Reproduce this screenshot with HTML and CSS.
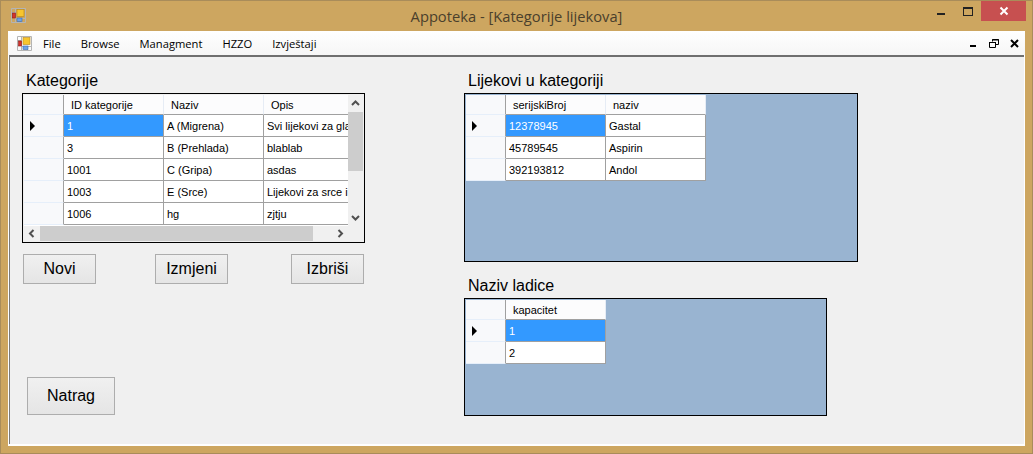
FILE: index.html
```html
<!DOCTYPE html>
<html lang="en">
<head>
<meta charset="UTF-8" />
<title>Appoteka - [Kategorije lijekova]</title>
<link rel="stylesheet" href="styles.css">
</head>
<body>
<svg class="defs" width="0" height="0">
    <symbol id="app-icon" viewBox="0 0 15 15">
        <path d="M0.5 0.5H14.5V14.5H0.5ZM0.5 4.5H4.5M4.5 0.5V14.5M4.5 10.5H14.5M10.5 10.5V14.5" fill="none" stroke="#b4b4b4" />
        <rect x="1.500" y="5" width="3" height="5" fill="#d5322c" stroke="#8c1c18" stroke-width="0.6" />
        <rect x="6" y="1.500" width="7" height="7" fill="#f7c52e" stroke="#b8861a" stroke-width="0.6" />
        <rect x="6" y="10" width="5" height="3.500" fill="#6ea2e6" stroke="#3a6cb0" stroke-width="0.6" />
    </symbol>
</svg>

<div class="window">
    <div class="titlebar">
        <div class="title-left">
            <svg class="icon"><use href="#app-icon" /></svg>
        </div>
        <div class="title">Appoteka - [Kategorije lijekova]</div>
        <div class="caption">
            <span class="cap-min"></span>
            <span class="cap-max"></span>
            <span class="cap-close">
                <svg width="10" height="10" viewBox="0 0 10 10"><path d="M1.5 1.5L8.5 8.5M8.5 1.5L1.5 8.5" stroke="#fff" stroke-width="2" /></svg>
            </span>
        </div>
    </div>

    <div class="client">
        <div class="menubar">
            <svg class="icon"><use href="#app-icon" /></svg>
            <nav class="menu">
                <span>File</span>
                <span>Browse</span>
                <span>Managment</span>
                <span>HZZO</span>
                <span>Izvještaji</span>
            </nav>
            <div class="mdi-controls">
                <span class="mdi-min"></span>
                <svg width="10" height="9" viewBox="0 0 10 9"><path d="M3.5 2.5V0.5H9.5V5.5H7M0.5 3.5H6.5V8.5H0.5Z" fill="none" stroke="#000" /><path d="M3 1H10M0 3.5H7" stroke="#000" /></svg>
                <svg width="9" height="9" viewBox="0 0 9 9"><path d="M1 1L8 8M8 1L1 8" stroke="#000" stroke-width="2" /></svg>
            </div>
        </div>

        <div class="form">
            <section class="col-left">
                <h2 class="label label-first">Kategorije</h2>
                <div class="dgv dgv-scroll">
                    <div class="rows rows-cat">
                        <div class="cell rowhead"></div>
                        <div class="cell head">ID kategorije</div>
                        <div class="cell head">Naziv</div>
                        <div class="cell head">Opis</div>

                        <div class="cell rowhead"><i class="arrow"></i></div>
                        <div class="cell selected">1</div>
                        <div class="cell">A (Migrena)</div>
                        <div class="cell">Svi lijekovi za gla</div>

                        <div class="cell rowhead"></div>
                        <div class="cell">3</div>
                        <div class="cell">B (Prehlada)</div>
                        <div class="cell">blablab</div>

                        <div class="cell rowhead"></div>
                        <div class="cell">1001</div>
                        <div class="cell">C (Gripa)</div>
                        <div class="cell">asdas</div>

                        <div class="cell rowhead"></div>
                        <div class="cell">1003</div>
                        <div class="cell">E (Srce)</div>
                        <div class="cell">Lijekovi za srce i</div>

                        <div class="cell rowhead"></div>
                        <div class="cell">1006</div>
                        <div class="cell">hg</div>
                        <div class="cell">zjtju</div>
                    </div>
                    <div class="vscroll">
                        <svg width="15" height="17" viewBox="0 0 15 17"><path d="M4 10L7.5 6.5L11 10" fill="none" stroke="#505050" stroke-width="2" /></svg>
                        <div class="vtrack"><div class="vthumb"></div></div>
                        <svg width="15" height="17" viewBox="0 0 15 17"><path d="M4 7L7.5 10.5L11 7" fill="none" stroke="#505050" stroke-width="2" /></svg>
                    </div>
                    <div class="hscroll">
                        <svg width="16" height="15" viewBox="0 0 16 15"><path d="M9.500 4L6 7.500L9.500 11" fill="none" stroke="#505050" stroke-width="2" /></svg>
                        <div class="htrack"><div class="hthumb"></div></div>
                        <svg width="16" height="15" viewBox="0 0 16 15"><path d="M6.500 4L10 7.500L6.500 11" fill="none" stroke="#505050" stroke-width="2" /></svg>
                    </div>
                </div>
                <div class="actions">
                    <button class="btn">Novi</button>
                    <button class="btn btn-edit">Izmjeni</button>
                    <button class="btn btn-delete">Izbriši</button>
                </div>
                <button class="btn btn-back">Natrag</button>
            </section>

            <section class="col-right">
                <h2 class="label label-first">Lijekovi u kategoriji</h2>
                <div class="dgv dgv-drugs">
                    <div class="rows rows-drugs">
                        <div class="cell rowhead"></div>
                        <div class="cell head">serijskiBroj</div>
                        <div class="cell head">naziv</div>

                        <div class="cell rowhead"><i class="arrow"></i></div>
                        <div class="cell selected">12378945</div>
                        <div class="cell">Gastal</div>

                        <div class="cell rowhead"></div>
                        <div class="cell">45789545</div>
                        <div class="cell">Aspirin</div>

                        <div class="cell rowhead"></div>
                        <div class="cell">392193812</div>
                        <div class="cell">Andol</div>
                    </div>
                </div>
                <h2 class="label label-second">Naziv ladice</h2>
                <div class="dgv dgv-drawers">
                    <div class="rows rows-drawers">
                        <div class="cell rowhead"></div>
                        <div class="cell head">kapacitet</div>

                        <div class="cell rowhead"><i class="arrow"></i></div>
                        <div class="cell selected">1</div>

                        <div class="cell rowhead"></div>
                        <div class="cell">2</div>
                    </div>
                </div>
            </section>
        </div>
    </div>
</div>
</body>
</html>
```

FILE: styles.css
```css
html, body {
    margin: 0;
    padding: 0;
    overflow: hidden;
}
body {
    width: 1033px;
    height: 454px;
    font-family: "Liberation Sans", Arial, sans-serif;
    color: #000;
}
.defs {
    display: block;
    position: absolute;
}
.window {
    width: 1033px;
    height: 454px;
    box-sizing: border-box;
    background: #cda660;
    border: 1px solid #a98c5a;
    display: flex;
    flex-direction: column;
}
.icon {
    width: 15px;
    height: 15px;
    display: block;
}

/* title bar */
.titlebar {
    height: 30px;
    flex: none;
    display: grid;
    grid-template-columns: 1fr auto 1fr;
    align-items: start;
}
.title-left {
    padding: 7px 0 0 10px;
}
.title {
    font-family: "Open Sans", "Noto Sans", sans-serif;
    font-size: 14.7px;
    line-height: 30px;
    color: #4a3f2c;
}
.caption {
    display: flex;
    justify-content: flex-end;
    align-items: flex-start;
    padding-right: 6px;
}
.cap-min {
    width: 8px;
    height: 2px;
    background: #222;
    margin-top: 12px;
    margin-right: 18px;
}
.cap-max {
    width: 8px;
    height: 6px;
    border: 1px solid #222;
    border-top-width: 2px;
    margin-top: 6px;
    margin-right: 8px;
}
.cap-close {
    width: 45px;
    height: 20px;
    background: #c75050;
    display: flex;
    align-items: center;
    justify-content: center;
}

/* client area */
.client {
    margin: 0 7px 7px;
    flex: 1;
    background: #fff;
    display: flex;
    flex-direction: column;
    min-height: 0;
}
.menubar {
    height: 24px;
    flex: none;
    display: flex;
    align-items: center;
    padding-left: 9px;
    background: linear-gradient(to bottom, #fff, #f6f6f6);
}
.menu {
    display: flex;
    margin-left: 11px;
    font-family: "Open Sans", "Noto Sans", sans-serif;
    font-size: 11.2px;
    gap: 20px;
}
.mdi-controls {
    margin-left: auto;
    padding-right: 6px;
    display: flex;
    align-items: center;
    gap: 11px;
}
.mdi-controls svg {
    display: block;
}
.mdi-min {
    width: 6px;
    height: 2px;
    background: #000;
    margin-top: 5px;
    margin-right: 2px;
}

/* form */
.form {
    flex: 1;
    min-height: 0;
    margin: 0 1px 2px 1px;
    background: #f0f0f0;
    border-top: 2px solid #6f6f6f;
    border-left: 1px solid #7a7a7a;
    display: flex;
    padding-left: 12px;
}
.col-left {
    width: 343px;
    flex: none;
}
.col-right {
    margin-left: 99px;
    width: 394px;
    flex: none;
}
.label {
    margin: 0;
    font-size: 16px;
    font-weight: normal;
    line-height: 18px;
    height: 18px;
    padding-left: 4px;
}
.label-first {
    margin-top: 15px;
    margin-bottom: 3px;
}
.label-second {
    margin-top: 15px;
    margin-bottom: 3px;
}

/* data grids */
.dgv {
    box-sizing: border-box;
    border: 1px solid #000;
    padding: 1px 0 0 1px;
    background: #99b4d1;
    overflow: hidden;
}
.dgv-scroll {
    height: 150px;
    background: #f0f0f0;
    display: grid;
    grid-template-columns: 324px 15px;
    grid-template-rows: 131px 15px;
}
.dgv-drugs {
    height: 169px;
}
.dgv-drawers {
    height: 118px;
    width: 363px;
}
.rows {
    display: grid;
    grid-auto-rows: 22px;
    grid-template-rows: 20px;
    font-size: 11px;
    overflow: hidden;
}
.rows-cat {
    grid-template-columns: 40px 100px 100px 100px;
    background: #fff;
}
.rows-drugs {
    grid-template-columns: 40px 100px 100px;
    justify-content: start;
}
.rows-drawers {
    grid-template-columns: 40px 100px;
    justify-content: start;
}
.cell {
    box-sizing: border-box;
    background: #fff;
    border-right: 1px solid #a0a0a0;
    border-bottom: 1px solid #a0a0a0;
    padding: 0 0 0 3px;
    line-height: 23px;
    white-space: nowrap;
    overflow: hidden;
}
.head {
    background: #fcfcfd;
    padding-left: 7px;
    line-height: 20px;
    border-right-color: #e6ecf5;
}
.rowhead {
    background: #f8f9fb;
    border-bottom-color: #e6effa;
    border-right-color: #a0a0a0;
    display: flex;
    align-items: center;
    padding-left: 6px;
}
.selected {
    background: #3399ff;
    color: #fff;
}
.arrow {
    display: block;
    width: 0;
    height: 0;
    border-top: 5px solid transparent;
    border-bottom: 5px solid transparent;
    border-left: 5px solid #000;
}
.vscroll {
    display: flex;
    flex-direction: column;
    background: #f0f0f0;
}
.vscroll svg, .hscroll svg {
    display: block;
    flex: none;
}
.vtrack {
    flex: 1;
}
.vthumb {
    height: 59px;
    background: #cdcdcd;
}
.hscroll {
    grid-column: 1 / 2;
    display: flex;
    background: #f0f0f0;
}
.htrack {
    flex: 1;
}
.hthumb {
    width: 273px;
    height: 100%;
    background: #cdcdcd;
}

/* buttons */
.actions {
    display: flex;
    margin: 11px 1px 0;
}
.btn {
    box-sizing: border-box;
    width: 73px;
    height: 30px;
    padding: 0;
    border: 1px solid #adadad;
    background: linear-gradient(to bottom, #f0f0f0, #e5e5e5);
    font-family: inherit;
    font-size: 16px;
    color: #000;
}
.btn-edit {
    margin-left: 59px;
}
.btn-delete {
    margin-left: 63px;
}
.btn-back {
    display: block;
    width: 88px;
    height: 38px;
    margin: 93px 0 0 5px;
}
```
